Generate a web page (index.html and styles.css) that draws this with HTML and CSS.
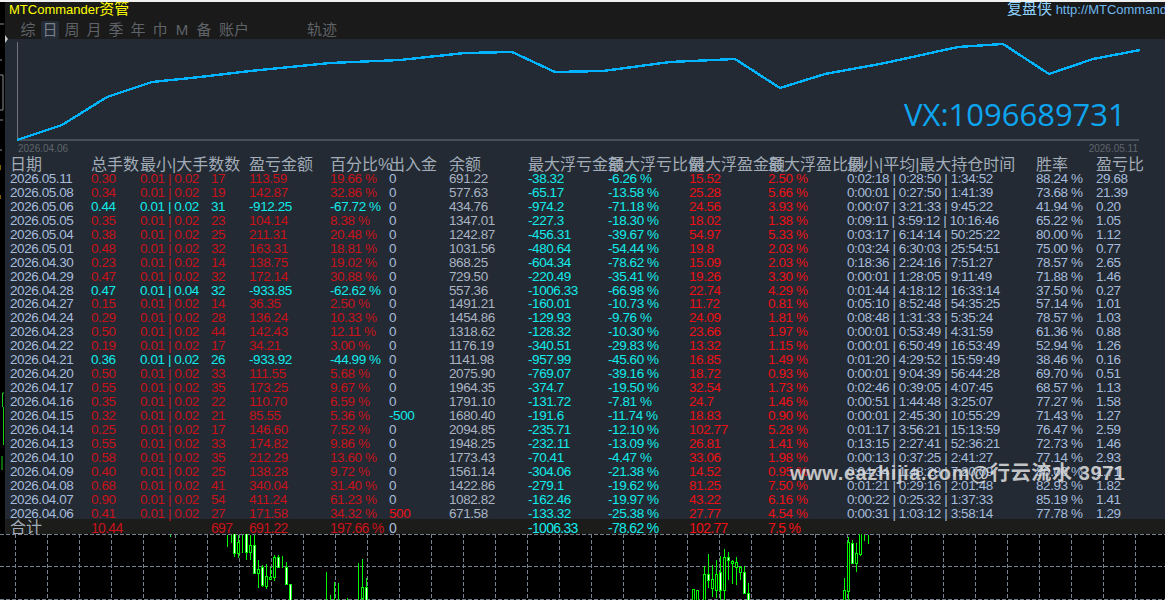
FILE: index.html
```html
<!DOCTYPE html>
<html lang="zh-CN">
<head>
    <meta charset="UTF-8">
    <meta name="viewport" content="width=device-width, initial-scale=1.0">
    <title>MTCommander资管</title>
    <link rel="stylesheet" href="styles.css">
</head>
<body>

<div class="screen">
    <div class="upper">
        <div class="rail">
            <svg class="rail-marks" width="9" height="532" viewBox="0 2 9 532">
                <path d="M0 24H4M0 60H2M0 75H3V110H0M0 120H3M0 150H2" stroke="#8a8f96" fill="none"/>
                <path d="M5 35L8 39L5 43Z" fill="#c8c8c8"/>
                <path d="M0 165V170M0 195V199" stroke="#ffc800" fill="none"/>
                <path d="M2.5 393H4M2.5 393V407M3.5 407V445M2 456V470" stroke="#19d219" fill="none"/>
            </svg>
        </div>
        <div class="panel">
            <div class="titlebar">
                <span class="brand">MTCommander<span class="brand-cn">资管</span></span>
                <span class="site"><span class="site-name">复盘侠</span> http://MTCommander.com</span>
            </div>
            <div class="tabs">
                <span class="tab">综</span>
                <span class="tab active">日</span>
                <span class="tab">周</span>
                <span class="tab">月</span>
                <span class="tab">季</span>
                <span class="tab">年</span>
                <span class="tab">巾</span>
                <span class="tab">M</span>
                <span class="tab">备</span>
                <span class="tab wide">账户</span>
                <span class="tab wide track">轨迹</span>
            </div>

            <div class="body">
                <div class="curve">
                    <svg class="curve-svg" width="1160" height="104" viewBox="5 39 1160 104">
                        <path d="M17.5 42V140H1139" stroke="#70757b" fill="none"/>
                        <path class="equity" d="M17 140L62 125L107 97L152 82L200 77L250 71L330 63L400 60L465 53L512 52L555 72L603 71L670 62L735 59L780 88L825 74L885 63L958 47L1003 44L1049 74L1093 59L1140 50"/>
                    </svg>
                    <div class="vx">VX:1096689731</div>
                    <div class="axis-dates"><span>2026.04.06</span><span>2026.05.11</span></div>
                </div>

                <div class="row head">
                    <span>日期</span><span>总手数</span><span>最小|大手数数</span><span></span><span>盈亏金额</span><span>百分比%</span><span>出入金</span><span>余额</span><span>最大浮亏金额</span><span>最大浮亏比例</span><span>最大浮盈金额</span><span>最大浮盈比例</span><span>最小|平均|最大持仓时间</span><span>胜率</span><span>盈亏比</span>
                </div>

                <div class="row"><span>2026.05.11</span><span>0.30</span><span>0.01 | 0.02</span><span>17</span><span>113.59</span><span>19.66 %</span><span>0</span><span>691.22</span><span>-38.32</span><span>-6.26 %</span><span>15.52</span><span>2.50 %</span><span>0:02:18 | 0:28:50 | 1:34:52</span><span>88.24 %</span><span>29.68</span></div>
                <div class="row"><span>2026.05.08</span><span>0.34</span><span>0.01 | 0.02</span><span>19</span><span>142.87</span><span>32.86 %</span><span>0</span><span>577.63</span><span>-65.17</span><span>-13.58 %</span><span>25.28</span><span>5.66 %</span><span>0:00:01 | 0:27:50 | 1:41:39</span><span>73.68 %</span><span>21.39</span></div>
                <div class="row loss"><span>2026.05.06</span><span>0.44</span><span>0.01 | 0.02</span><span>31</span><span>-912.25</span><span>-67.72 %</span><span>0</span><span>434.76</span><span>-974.2</span><span>-71.18 %</span><span>24.56</span><span>3.93 %</span><span>0:00:07 | 3:21:33 | 9:45:22</span><span>41.94 %</span><span>0.20</span></div>
                <div class="row"><span>2026.05.05</span><span>0.35</span><span>0.01 | 0.02</span><span>23</span><span>104.14</span><span>8.38 %</span><span>0</span><span>1347.01</span><span>-227.3</span><span>-18.30 %</span><span>18.02</span><span>1.38 %</span><span>0:09:11 | 3:59:12 | 10:16:46</span><span>65.22 %</span><span>1.05</span></div>
                <div class="row"><span>2026.05.04</span><span>0.38</span><span>0.01 | 0.02</span><span>25</span><span>211.31</span><span>20.48 %</span><span>0</span><span>1242.87</span><span>-456.31</span><span>-39.67 %</span><span>54.97</span><span>5.33 %</span><span>0:03:17 | 6:14:14 | 50:25:22</span><span>80.00 %</span><span>1.12</span></div>
                <div class="row"><span>2026.05.01</span><span>0.48</span><span>0.01 | 0.02</span><span>32</span><span>163.31</span><span>18.81 %</span><span>0</span><span>1031.56</span><span>-480.64</span><span>-54.44 %</span><span>19.8</span><span>2.03 %</span><span>0:03:24 | 6:30:03 | 25:54:51</span><span>75.00 %</span><span>0.77</span></div>
                <div class="row"><span>2026.04.30</span><span>0.23</span><span>0.01 | 0.02</span><span>14</span><span>138.75</span><span>19.02 %</span><span>0</span><span>868.25</span><span>-604.34</span><span>-78.62 %</span><span>15.09</span><span>2.03 %</span><span>0:18:36 | 2:24:16 | 7:51:27</span><span>78.57 %</span><span>2.65</span></div>
                <div class="row"><span>2026.04.29</span><span>0.47</span><span>0.01 | 0.02</span><span>32</span><span>172.14</span><span>30.88 %</span><span>0</span><span>729.50</span><span>-220.49</span><span>-35.41 %</span><span>19.26</span><span>3.30 %</span><span>0:00:01 | 1:28:05 | 9:11:49</span><span>71.88 %</span><span>1.46</span></div>
                <div class="row loss"><span>2026.04.28</span><span>0.47</span><span>0.01 | 0.04</span><span>32</span><span>-933.85</span><span>-62.62 %</span><span>0</span><span>557.36</span><span>-1006.33</span><span>-66.98 %</span><span>22.74</span><span>4.29 %</span><span>0:01:44 | 4:18:12 | 16:33:14</span><span>37.50 %</span><span>0.27</span></div>
                <div class="row"><span>2026.04.27</span><span>0.15</span><span>0.01 | 0.02</span><span>14</span><span>36.35</span><span>2.50 %</span><span>0</span><span>1491.21</span><span>-160.01</span><span>-10.73 %</span><span>11.72</span><span>0.81 %</span><span>0:05:10 | 8:52:48 | 54:35:25</span><span>57.14 %</span><span>1.01</span></div>
                <div class="row"><span>2026.04.24</span><span>0.29</span><span>0.01 | 0.02</span><span>28</span><span>136.24</span><span>10.33 %</span><span>0</span><span>1454.86</span><span>-129.93</span><span>-9.76 %</span><span>24.09</span><span>1.81 %</span><span>0:08:48 | 1:31:33 | 5:35:24</span><span>78.57 %</span><span>1.03</span></div>
                <div class="row"><span>2026.04.23</span><span>0.50</span><span>0.01 | 0.02</span><span>44</span><span>142.43</span><span>12.11 %</span><span>0</span><span>1318.62</span><span>-128.32</span><span>-10.30 %</span><span>23.66</span><span>1.97 %</span><span>0:00:01 | 0:53:49 | 4:31:59</span><span>61.36 %</span><span>0.88</span></div>
                <div class="row"><span>2026.04.22</span><span>0.19</span><span>0.01 | 0.02</span><span>17</span><span>34.21</span><span>3.00 %</span><span>0</span><span>1176.19</span><span>-340.51</span><span>-29.83 %</span><span>13.32</span><span>1.15 %</span><span>0:00:01 | 6:50:49 | 16:53:49</span><span>52.94 %</span><span>1.26</span></div>
                <div class="row loss"><span>2026.04.21</span><span>0.36</span><span>0.01 | 0.02</span><span>26</span><span>-933.92</span><span>-44.99 %</span><span>0</span><span>1141.98</span><span>-957.99</span><span>-45.60 %</span><span>16.85</span><span>1.49 %</span><span>0:01:20 | 4:29:52 | 15:59:49</span><span>38.46 %</span><span>0.16</span></div>
                <div class="row"><span>2026.04.20</span><span>0.50</span><span>0.01 | 0.02</span><span>33</span><span>111.55</span><span>5.68 %</span><span>0</span><span>2075.90</span><span>-769.07</span><span>-39.16 %</span><span>18.72</span><span>0.93 %</span><span>0:00:01 | 9:04:39 | 56:44:28</span><span>69.70 %</span><span>0.51</span></div>
                <div class="row"><span>2026.04.17</span><span>0.55</span><span>0.01 | 0.02</span><span>35</span><span>173.25</span><span>9.67 %</span><span>0</span><span>1964.35</span><span>-374.7</span><span>-19.50 %</span><span>32.54</span><span>1.73 %</span><span>0:02:46 | 0:39:05 | 4:07:45</span><span>68.57 %</span><span>1.13</span></div>
                <div class="row"><span>2026.04.16</span><span>0.35</span><span>0.01 | 0.02</span><span>22</span><span>110.70</span><span>6.59 %</span><span>0</span><span>1791.10</span><span>-131.72</span><span>-7.81 %</span><span>24.7</span><span>1.46 %</span><span>0:00:51 | 1:44:48 | 3:25:07</span><span>77.27 %</span><span>1.58</span></div>
                <div class="row"><span>2026.04.15</span><span>0.32</span><span>0.01 | 0.02</span><span>21</span><span>85.55</span><span>5.36 %</span><span class="cash-out">-500</span><span>1680.40</span><span>-191.6</span><span>-11.74 %</span><span>18.83</span><span>0.90 %</span><span>0:00:01 | 2:45:30 | 10:55:29</span><span>71.43 %</span><span>1.27</span></div>
                <div class="row"><span>2026.04.14</span><span>0.25</span><span>0.01 | 0.02</span><span>17</span><span>146.60</span><span>7.52 %</span><span>0</span><span>2094.85</span><span>-235.71</span><span>-12.10 %</span><span>102.77</span><span>5.28 %</span><span>0:01:17 | 3:56:21 | 15:13:59</span><span>76.47 %</span><span>2.59</span></div>
                <div class="row"><span>2026.04.13</span><span>0.55</span><span>0.01 | 0.02</span><span>33</span><span>174.82</span><span>9.86 %</span><span>0</span><span>1948.25</span><span>-232.11</span><span>-13.09 %</span><span>26.81</span><span>1.41 %</span><span>0:13:15 | 2:27:41 | 52:36:21</span><span>72.73 %</span><span>1.46</span></div>
                <div class="row"><span>2026.04.10</span><span>0.58</span><span>0.01 | 0.02</span><span>35</span><span>212.29</span><span>13.60 %</span><span>0</span><span>1773.43</span><span>-70.41</span><span>-4.47 %</span><span>33.06</span><span>1.98 %</span><span>0:00:13 | 0:37:25 | 2:41:27</span><span>77.14 %</span><span>2.93</span></div>
                <div class="row"><span>2026.04.09</span><span>0.40</span><span>0.01 | 0.02</span><span>25</span><span>138.28</span><span>9.72 %</span><span>0</span><span>1561.14</span><span>-304.06</span><span>-21.38 %</span><span>14.52</span><span>0.95 %</span><span>0:04:34 | 1:48:28 | 7:20:09</span><span>80.00 %</span><span>1.71</span></div>
                <div class="row"><span>2026.04.08</span><span>0.68</span><span>0.01 | 0.02</span><span>41</span><span>340.04</span><span>31.40 %</span><span>0</span><span>1422.86</span><span>-279.1</span><span>-19.62 %</span><span>81.25</span><span>7.50 %</span><span>0:01:21 | 0:29:16 | 2:01:48</span><span>82.93 %</span><span>1.82</span></div>
                <div class="row"><span>2026.04.07</span><span>0.90</span><span>0.01 | 0.02</span><span>54</span><span>411.24</span><span>61.23 %</span><span>0</span><span>1082.82</span><span>-162.46</span><span>-19.97 %</span><span>43.22</span><span>6.16 %</span><span>0:00:22 | 0:25:32 | 1:37:33</span><span>85.19 %</span><span>1.41</span></div>
                <div class="row"><span>2026.04.06</span><span>0.41</span><span>0.01 | 0.02</span><span>27</span><span>171.58</span><span>34.32 %</span><span class="cash-in">500</span><span>671.58</span><span>-133.32</span><span>-25.38 %</span><span>27.77</span><span>4.54 %</span><span>0:00:31 | 1:03:12 | 3:58:14</span><span>77.78 %</span><span>1.29</span></div>

                <div class="row total"><span class="total-label">合计</span><span>10.44</span><span></span><span>697</span><span>691.22</span><span>197.66 %</span><span>0</span><span></span><span>-1006.33</span><span>-78.62 %</span><span>102.77</span><span>7.5 %</span><span></span><span></span><span></span></div>
            </div>
        </div>
    </div>

    <svg class="candles" width="1165" height="66" viewBox="0 534 1165 66">
        <path class="grid-line" d="M0 534.5H1165M0 566.5H1165M0 599.5H1165M15.5 534V600M47.5 534V600M79.5 534V600M111.5 534V600M143.5 534V600M175.5 534V600M207.5 534V600M239.5 534V600M271.5 534V600M303.5 534V600M335.5 534V600M367.5 534V600M399.5 534V600M431.5 534V600M463.5 534V600M495.5 534V600M527.5 534V600M559.5 534V600M591.5 534V600M623.5 534V600M655.5 534V600M687.5 534V600M719.5 534V600M751.5 534V600M783.5 534V600M815.5 534V600M847.5 534V600M879.5 534V600M911.5 534V600M943.5 534V600M975.5 534V600M1007.5 534V600M1039.5 534V600M1071.5 534V600M1103.5 534V600M1135.5 534V600"/>
        <path class="wick" d="M170.5 535V537M227.5 535V547M231.5 535V543M234.5 535V557M238.5 535V558M242.5 535V553M246.5 535V560M250.5 535V560M254.5 535V573M258.5 560V588M262.5 565V587M266.5 564V589M270.5 567V580M274.5 555V581M278.5 555V568M282.5 556V568M286.5 562V585M326.5 572V600M330.5 595V600M334.5 582V600M338.5 583V600M347.5 598V600M358.5 563V600M362.5 559V600M366.5 578V600"/>
        <path class="wick" d="M704.5 566V600M708.5 554V588M712.5 565V597M716.5 560V598M720.5 556V600M724.5 549V600M728.5 552V580M732.5 560V584M736.5 557V585M740.5 566V580M744.5 566V593M748.5 583V600M844.5 578V600M848.5 537V600M852.5 540V563M856.5 543V572M860.5 535V556M864.5 535V541M868.5 535V544"/>
        <g class="body-down">
            <rect x="237.5" y="542" width="2" height="11"/><rect x="249.5" y="545" width="2" height="7"/><rect x="257.5" y="569" width="2" height="4"/><rect x="265.5" y="576" width="2" height="10"/><rect x="269.5" y="577" width="2" height="2"/><rect x="273.5" y="557" width="2" height="20"/><rect x="361.5" y="587" width="2" height="11"/>
            <rect x="692.5" y="589" width="2" height="12"/><rect x="696.5" y="590" width="2" height="11"/><rect x="703.5" y="574" width="2" height="27"/><rect x="711.5" y="579" width="2" height="9"/><rect x="715.5" y="574" width="2" height="16"/><rect x="723.5" y="557" width="2" height="33"/><rect x="731.5" y="561" width="2" height="2"/><rect x="735.5" y="562" width="2" height="5"/><rect x="739.5" y="567" width="2" height="5"/>
            <rect x="843.5" y="590" width="2" height="11"/><rect x="847.5" y="542" width="2" height="49"/><rect x="855.5" y="553" width="2" height="10"/><rect x="859.5" y="533" width="2" height="21"/>
        </g>
        <g class="body-up">
            <rect x="233.5" y="533" width="2" height="20"/><rect x="245.5" y="533" width="2" height="19"/><rect x="253.5" y="545" width="2" height="28"/><rect x="261.5" y="567" width="2" height="18"/><rect x="277.5" y="557" width="2" height="10"/><rect x="285.5" y="567" width="2" height="17"/><rect x="289.5" y="584" width="2" height="17"/><rect x="365.5" y="587" width="2" height="14"/>
            <rect x="707.5" y="574" width="2" height="6"/><rect x="719.5" y="572" width="2" height="18"/><rect x="727.5" y="557" width="2" height="3"/><rect x="743.5" y="572" width="2" height="21"/><rect x="747.5" y="593" width="2" height="8"/><rect x="851.5" y="543" width="2" height="20"/>
        </g>
    </svg>

    <div class="watermark">www.eazhijia.com@行云流水 3971</div>
</div>

</body>
</html>
```

FILE: styles.css
```css
body {
    margin: 0;
    background-color: #000;
    font-family: "Liberation Sans", "Noto Sans CJK SC", sans-serif;
    overflow: hidden;
}

.screen {
    position: relative;
    width: 1165px;
    height: 600px;
    border-top: 2px solid #f0f0f0;
    box-sizing: border-box;
    overflow: hidden;
}

.upper {
    display: flex;
    height: 532px;
}

.rail {
    position: relative;
    width: 5px;
    flex-shrink: 0;
}

.rail-marks {
    position: absolute;
    top: 0;
    left: 0;
    z-index: 2;
}

.panel {
    flex: 1;
    min-width: 0;
    display: flex;
    flex-direction: column;
    background-color: #1a1a1a;
}

.titlebar {
    display: flex;
    justify-content: space-between;
    height: 19px;
    font-size: 13px;
    line-height: 14px;
    padding-left: 4px;
}

.brand {
    color: #ffff00;
}

.brand-cn {
    font-size: 15px;
}

.site {
    width: 158px;
    color: #6fb8ee;
    white-space: nowrap;
    overflow: hidden;
    font-size: 13px;
}

.site-name {
    color: #8fd2ff;
    font-size: 15px;
}

.tabs {
    display: flex;
    height: 18px;
    padding-left: 12px;
    font-size: 15px;
    line-height: 17px;
    color: #5f6368;
}

.tab {
    width: 22px;
    text-align: center;
}

.tab.active {
    color: #7a8088;
    background-color: #242c37;
    border-radius: 2px;
    width: 18px;
    margin: 0 2px;
}

.tab.wide {
    width: 38px;
    white-space: nowrap;
}

.tab.track {
    margin-left: 50px;
}

.body {
    flex: 1;
    min-height: 0;
    background-color: #232a33;
    overflow: hidden;
}

.curve {
    position: relative;
    height: 118px;
}

.curve-svg {
    display: block;
}

.equity {
    fill: none;
    stroke: #00b4ff;
    stroke-width: 2.4;
    shape-rendering: crispEdges;
}

.vx {
    position: absolute;
    left: 899px;
    top: 55px;
    font-family: "Open Sans", sans-serif;
    font-size: 31px;
    line-height: 40px;
    color: #0ea5f0;
}

.axis-dates {
    display: flex;
    justify-content: space-between;
    padding: 0 27px 0 13px;
    font-size: 10px;
    line-height: 11px;
    color: #5f656c;
}

.row {
    display: grid;
    grid-template-columns: 81px 49px 71px 38px 81px 59px 60px 79px 80px 81px 79px 79px 189px 60px 69px;
    height: 13.95px;
    padding-left: 5px;
    font-size: 13.5px;
    line-height: 14px;
    letter-spacing: -0.42px;
    white-space: nowrap;
    color: #a6bcdc;
}

.row > span:nth-child(n+2):nth-child(-n+6) {
    color: #c8121a;
}

.row > span:nth-child(n+9):nth-child(-n+10) {
    color: #12eaea;
}

.row > span:nth-child(n+11):nth-child(-n+12) {
    color: #ec1016;
}

.row > span:nth-child(8) {
    color: #a9b3c2;
}

.row.loss > span:nth-child(n+2):nth-child(-n+6) {
    color: #12eaea;
}

.row > .cash-out {
    color: #12eaea;
}

.row > .cash-in {
    color: #ec1016;
}

.row.head {
    height: 15px;
    font-size: 16px;
    line-height: 15px;
    letter-spacing: 0;
    color: #a2acb8;
}

.row.head > span {
    color: #a2acb8 !important;
}

.row.total {
    height: 16px;
    margin-top: -1px;
    font-size: 14px;
    line-height: 18px;
    letter-spacing: -0.7px;
    background-color: #1c1c1a;
    overflow: hidden;
}

.total-label {
    color: #a2acb8;
    font-size: 16px;
    letter-spacing: 0;
}

.candles {
    display: block;
}

.grid-line {
    fill: none;
    stroke: #76808e;
    stroke-dasharray: 4 2;
    shape-rendering: crispEdges;
}

.wick {
    fill: none;
    stroke: #00f800;
    shape-rendering: crispEdges;
}

.body-down rect {
    fill: #000;
    stroke: #00f800;
    shape-rendering: crispEdges;
}

.body-up rect {
    fill: #fff;
    stroke: #00f800;
    shape-rendering: crispEdges;
}

.watermark {
    position: absolute;
    left: 790px;
    top: 459px;
    font-size: 20px;
    line-height: 24px;
    font-weight: bold;
    letter-spacing: 0.6px;
    color: rgba(225, 225, 225, 0.85);
    white-space: nowrap;
}
```
